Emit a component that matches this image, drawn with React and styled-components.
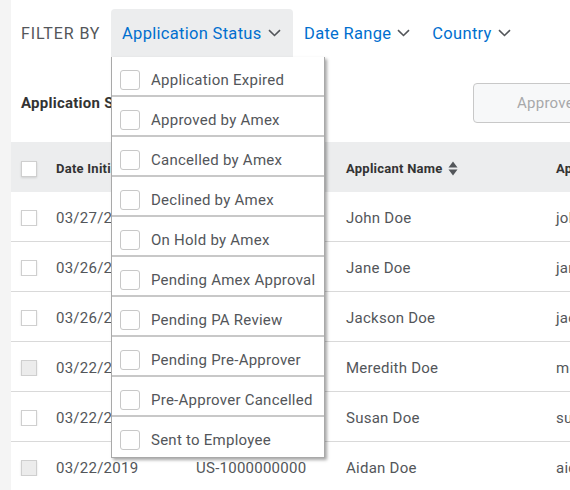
import React from "react";
import styled, { createGlobalStyle } from "styled-components";

const Global = createGlobalStyle`
  html, body { margin: 0; padding: 0; }
  body {
    background: #f4f4f4;
    font-family: Roboto, "Liberation Sans", Arial, sans-serif;
    letter-spacing: 0.25px;
    overflow: hidden;
    width: 570px;
    height: 490px;
  }
`;

const Page = styled.div`
  margin-left: 11px;
  background: #fff;
  min-height: 490px;
  padding-top: 9px;
  width: 700px;
`;

const FilterBar = styled.div`
  display: flex;
  align-items: stretch;
  height: 48px;
  padding-left: 10px;
`;

const FilterLabel = styled.div`
  display: flex;
  align-items: center;
  font-size: 16px;
  color: #53565a;
  letter-spacing: 0.9px;
  width: 90px;
`;

const FilterWrap = styled.div`
  position: relative;
  display: flex;
`;

const FilterButton = styled.div`
  display: flex;
  align-items: center;
  gap: 6px;
  padding: 0 11px;
  font-size: 16.5px;
  letter-spacing: 0.3px;
  color: #006fcf;
  background: ${(p) => (p.$open ? "#ecedee" : "transparent")};
  border-radius: 4px 4px 0 0;
  width: ${(p) => (p.$w ? p.$w + "px" : "auto")};
  box-sizing: border-box;
`;

const Chevron = () => (
  <svg width="13" height="8" viewBox="0 0 13 8">
    <path d="M1 1.2 L6.5 6.5 L12 1.2" fill="none" stroke="#53565a" strokeWidth="1.6" />
  </svg>
);

const Menu = styled.div`
  position: absolute;
  top: 100%;
  left: 0;
  width: 214px;
  background: #fff;
  border: 1px solid #a9a9a9;
  border-top: none;
  box-sizing: border-box;
  box-shadow: 2px 2px 3px rgba(0, 0, 0, 0.35);
  z-index: 10;
`;

const MenuItem = styled.div`
  display: flex;
  align-items: center;
  box-sizing: border-box;
  height: 40px;
  padding: 7px 0 0 8px;
  gap: 11px;
  font-size: 15px;
  color: #53565a;
  border-bottom: 2px solid #c8c8c8;
  &:last-child {
    border-bottom: none;
    padding-top: 6px;
  }
`;

const MenuBox = styled.span`
  width: 20px;
  height: 20px;
  box-sizing: border-box;
  border: 1px solid #c8c8c8;
  border-radius: 3px;
  background: #fff;
  flex-shrink: 0;
`;

const ActionRow = styled.div`
  display: flex;
  align-items: center;
  margin-top: 26px;
  height: 40px;
  padding-left: 10px;
`;

const SectionTitle = styled.div`
  font-size: 15px;
  font-weight: 700;
  color: #333;
  width: 452px;
  white-space: nowrap;
`;

const ApproveButton = styled.div`
  width: 150px;
  height: 40px;
  box-sizing: border-box;
  border: 1px solid #c8c8c8;
  border-radius: 4px;
  background: #f7f8f9;
  color: #a7a8aa;
  font-size: 15px;
  display: flex;
  align-items: center;
  padding-left: 43px;
`;

const Table = styled.div`
  margin-top: 19px;
`;

const cols = "35px 140px 150px 210px 160px";

const HeadRow = styled.div`
  display: grid;
  grid-template-columns: ${cols};
  height: 50px;
  box-sizing: border-box;
  padding-top: 3px;
  background: #ecedee;
  align-items: center;
`;

const Row = styled.div`
  display: grid;
  grid-template-columns: ${cols};
  height: 50px;
  box-sizing: border-box;
  padding-top: 2px;
  border-bottom: 1px solid #d9d9d9;
  align-items: center;
`;

const HeadCell = styled.div`
  padding-left: 10px;
  font-size: 13px;
  font-weight: 700;
  color: #333;
  display: flex;
  align-items: center;
  gap: 5px;
  white-space: nowrap;
`;

const Cell = styled.div`
  padding-left: 10px;
  font-size: 15px;
  color: #53565a;
  white-space: nowrap;
  overflow: hidden;
`;

const RowBox = styled.span`
  display: block;
  width: 16px;
  height: 16px;
  box-sizing: border-box;
  border: 1px solid #cfcfcf;
  background: ${(p) => (p.$disabled ? "#ececec" : "#fff")};
  box-shadow: 0 1px 2px rgba(0, 0, 0, 0.12);
`;

const SortIcon = () => (
  <svg width="10" height="15" viewBox="0 0 10 15">
    <path d="M5 0.5 L9.5 6.5 L0.5 6.5 Z" fill="#53565a" />
    <path d="M5 14.5 L9.5 8.5 L0.5 8.5 Z" fill="#53565a" />
  </svg>
);

const statuses = [
  "Application Expired",
  "Approved by Amex",
  "Cancelled by Amex",
  "Declined by Amex",
  "On Hold by Amex",
  "Pending Amex Approval",
  "Pending PA Review",
  "Pending Pre-Approver",
  "Pre-Approver Cancelled",
  "Sent to Employee",
];

const rows = [
  { date: "03/27/2019", name: "John Doe", email: "john.doe@example.com" },
  { date: "03/26/2019", name: "Jane Doe", email: "jane.doe@example.com" },
  { date: "03/26/2019", name: "Jackson Doe", email: "jackson.doe@example.com" },
  { date: "03/22/2019", name: "Meredith Doe", email: "meredith.doe@example.com", disabled: true },
  { date: "03/22/2019", name: "Susan Doe", email: "susan.doe@example.com" },
  { date: "03/22/2019", name: "Aidan Doe", email: "aidan.doe@example.com", disabled: true },
];

export default function App() {
  return (
    <>
      <Global />
      <Page>
        <FilterBar>
          <FilterLabel>FILTER BY</FilterLabel>
          <FilterWrap>
            <FilterButton $open $w={182}>
              Application Status <Chevron />
            </FilterButton>
            <Menu>
              {statuses.map((s) => (
                <MenuItem key={s}>
                  <MenuBox />
                  {s}
                </MenuItem>
              ))}
            </Menu>
          </FilterWrap>
          <FilterButton>
            Date Range <Chevron />
          </FilterButton>
          <FilterButton>
            Country <Chevron />
          </FilterButton>
        </FilterBar>

        <ActionRow>
          <SectionTitle>Application Status</SectionTitle>
          <ApproveButton>Approve</ApproveButton>
        </ActionRow>

        <Table>
          <HeadRow>
            <HeadCell>
              <RowBox />
            </HeadCell>
            <HeadCell>Date Initiated</HeadCell>
            <HeadCell>Application ID</HeadCell>
            <HeadCell>
              Applicant Name <SortIcon />
            </HeadCell>
            <HeadCell>Applicant Email</HeadCell>
          </HeadRow>
          {rows.map((r, i) => (
            <Row key={i}>
              <Cell>
                <RowBox $disabled={r.disabled} />
              </Cell>
              <Cell>{r.date}</Cell>
              <Cell>US-1000000000</Cell>
              <Cell>{r.name}</Cell>
              <Cell>{r.email}</Cell>
            </Row>
          ))}
        </Table>
      </Page>
    </>
  );
}
